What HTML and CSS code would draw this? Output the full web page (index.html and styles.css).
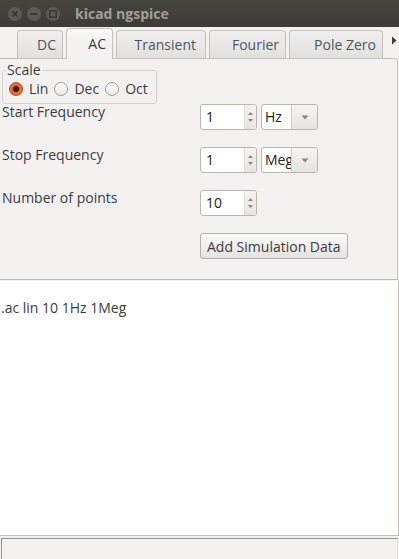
FILE: index.html
```html
<!DOCTYPE html>
<html lang="en">
<head>
    <meta charset="UTF-8">
    <title>kicad ngspice</title>
    <link rel="stylesheet" href="styles.css">
</head>
<body>
    <div class="titlebar">
        <div class="win-buttons">
            <span class="win-btn">
                <svg width="14" height="14" viewBox="0 0 14 14"><path d="M4.5 4.5 L9.5 9.5 M9.5 4.5 L4.5 9.5" stroke="#34332f" stroke-width="1.6"/></svg>
            </span>
            <span class="win-btn">
                <svg width="14" height="14" viewBox="0 0 14 14"><path d="M3.5 7 H10.5" stroke="#34332f" stroke-width="1.6"/></svg>
            </span>
            <span class="win-btn">
                <svg width="14" height="14" viewBox="0 0 14 14"><rect x="3.8" y="3.8" width="6.4" height="6.4" fill="none" stroke="#34332f" stroke-width="1.3"/></svg>
            </span>
        </div>
        <div class="title">kicad ngspice</div>
    </div>

    <div class="tabs">
        <span class="tab-scroll left"></span>
        <div class="tab tab-dc">DC</div>
        <div class="tab tab-ac active">AC</div>
        <div class="tab tab-transient">Transient</div>
        <div class="tab tab-fourier">Fourier</div>
        <div class="tab tab-pz">Pole Zero</div>
        <span class="tab-scroll right">
            <svg width="6" height="9" viewBox="0 0 6 9"><path d="M1 0.5 L5.5 4.5 L1 8.5 Z" fill="#3c3c3c"/></svg>
        </span>
    </div>

    <div class="panel">
        <fieldset class="scale">
            <legend>Scale</legend>
            <label class="radio"><span class="dot checked"></span>Lin</label>
            <label class="radio"><span class="dot"></span>Dec</label>
            <label class="radio"><span class="dot"></span>Oct</label>
        </fieldset>

        <div class="form">
            <div class="label">Start Frequency</div>
            <div class="controls">
                <div class="spin">
                    <span class="spin-value">1</span>
                    <span class="spin-btns">
                        <svg width="7" height="14" viewBox="0 0 7 14"><path d="M1 5 L3.5 2 L6 5 Z M1 9 L3.5 12 L6 9 Z" fill="#8e8b86"/></svg>
                    </span>
                </div>
                <div class="combo">
                    <span class="combo-value">Hz</span>
                    <span class="combo-arrow">
                        <svg width="8" height="5" viewBox="0 0 8 5"><path d="M0.5 0.5 H7.5 L4 4.5 Z" fill="#8a8782"/></svg>
                    </span>
                </div>
            </div>

            <div class="label">Stop Frequency</div>
            <div class="controls">
                <div class="spin">
                    <span class="spin-value">1</span>
                    <span class="spin-btns">
                        <svg width="7" height="14" viewBox="0 0 7 14"><path d="M1 5 L3.5 2 L6 5 Z M1 9 L3.5 12 L6 9 Z" fill="#8e8b86"/></svg>
                    </span>
                </div>
                <div class="combo">
                    <span class="combo-value">Meg</span>
                    <span class="combo-arrow">
                        <svg width="8" height="5" viewBox="0 0 8 5"><path d="M0.5 0.5 H7.5 L4 4.5 Z" fill="#8a8782"/></svg>
                    </span>
                </div>
            </div>

            <div class="label">Number of points</div>
            <div class="controls">
                <div class="spin">
                    <span class="spin-value">10</span>
                    <span class="spin-btns">
                        <svg width="7" height="14" viewBox="0 0 7 14"><path d="M1 5 L3.5 2 L6 5 Z M1 9 L3.5 12 L6 9 Z" fill="#8e8b86"/></svg>
                    </span>
                </div>
            </div>

            <div class="label"></div>
            <div class="controls">
                <button class="btn">Add Simulation Data</button>
            </div>
        </div>
    </div>

    <div class="output">.ac lin 10 1Hz 1Meg</div>

    <div class="statusbar"></div>
</body>
</html>
```

FILE: styles.css
```css
* {
    margin: 0;
    padding: 0;
    box-sizing: border-box;
}

body {
    width: 399px;
    height: 559px;
    overflow: hidden;
    background-color: #f2f1f0;
    font-family: 'Open Sans', 'DejaVu Sans', sans-serif;
    font-size: 14px;
    line-height: 16px;
    color: #3c3c3c;
    display: flex;
    flex-direction: column;
}

.titlebar {
    height: 27px;
    flex: none;
    background: linear-gradient(#46453f, #3c3b37);
    display: flex;
    align-items: center;
}

.win-buttons {
    display: flex;
    gap: 5px;
    padding-left: 8px;
}

.win-btn {
    width: 14px;
    height: 14px;
    border-radius: 50%;
    background-color: #5b5a55;
    display: flex;
}

.title {
    margin-left: 15px;
    font-weight: bold;
    font-size: 14px;
    color: #a29f98;
}

.tabs {
    height: 31px;
    flex: none;
    display: flex;
    align-items: flex-end;
    gap: 3px;
}

.tab-scroll.left {
    width: 14px;
}

.tab-scroll.right {
    align-self: center;
    margin-left: 5px;
    display: flex;
    margin-top: -4px;
}

.tab {
    height: 28px;
    border: 1px solid #c4c1bc;
    border-bottom: none;
    border-radius: 4px 4px 0 0;
    background: linear-gradient(#f0efed, #e2e0dd);
    color: #4a5666;
    text-align: right;
    padding: 6px 6px 0 0;
    white-space: nowrap;
}

.tab.active {
    height: 31px;
    margin-bottom: -1px;
    position: relative;
    z-index: 1;
    background: linear-gradient(#fafaf9, #f2f1f0 40%);
    color: #3c3c3c;
    padding-top: 7px;
}

.tab-dc { width: 46px; }
.tab-ac { width: 47px; }
.tab-transient { width: 90px; padding-right: 9px; }
.tab-fourier { width: 77px; }
.tab-pz { width: 94px; }

.panel {
    height: 222px;
    flex: none;
    width: 398px;
    border-top: 1px solid #c4c1bc;
    border-right: 1px solid #c4c1bc;
    border-bottom: 1px solid #bcb9b4;
    border-radius: 0 4px 0 0;
    padding: 3px 0 0 2px;
}

.scale {
    width: 155px;
    height: 42px;
    border: 1px solid #d5d2ce;
    border-radius: 3px;
    padding: 0 0 0 6px;
    display: flex;
    align-items: center;
    gap: 6px;
}

.scale legend {
    padding: 0 1px;
    margin-left: -3px;
    color: #3c3c3c;
}

.radio {
    display: flex;
    align-items: center;
    gap: 6px;
    margin-top: -4px;
}

.dot {
    width: 14px;
    height: 14px;
    border-radius: 50%;
    border: 1px solid #9d9a95;
    background: linear-gradient(#ffffff, #ecebe9);
    display: inline-block;
}

.dot.checked {
    border-color: #b34d1f;
    background: radial-gradient(circle, #3b1d0f 0, #3b1d0f 2.5px, #e4622c 3.5px, #ef7a45 100%);
}

.form {
    display: grid;
    grid-template-columns: 198px auto;
    grid-auto-rows: 26px;
    row-gap: 17px;
}

.controls {
    display: flex;
    gap: 4px;
}

.spin {
    width: 57px;
    height: 26px;
    border: 1px solid #b9b6b1;
    border-radius: 3px;
    background-color: #fff;
    display: flex;
}

.spin-value {
    flex: 1;
    padding: 4px 0 0 5px;
    color: #222;
}

.spin-btns {
    width: 12px;
    border-left: 1px solid #dedcd9;
    background: linear-gradient(#f4f3f2, #e7e5e3);
    border-radius: 0 3px 3px 0;
    display: flex;
    align-items: center;
    justify-content: center;
}

.combo {
    width: 57px;
    height: 26px;
    border: 1px solid #b9b6b1;
    border-radius: 3px;
    background-color: #fff;
    display: flex;
    overflow: hidden;
}

.combo-value {
    width: 29px;
    overflow: hidden;
    white-space: nowrap;
    padding: 4px 0 0 3px;
    color: #222;
}

.combo-arrow {
    flex: 1;
    border-left: 1px solid #d3d0cc;
    background: linear-gradient(#f5f4f3, #e6e4e1);
    display: flex;
    align-items: center;
    justify-content: center;
}

.btn {
    height: 26px;
    padding: 0 6px;
    border: 1px solid #b3b0ab;
    border-radius: 3px;
    background: linear-gradient(#fbfbfa, #e4e2df);
    font-family: 'Open Sans', 'DejaVu Sans', sans-serif;
    font-size: 14px;
    color: #3c3c3c;
}

.output {
    flex: none;
    height: 255px;
    margin-top: 1px;
    background-color: #fff;
    border-right: 1px solid #c4c1bc;
    border-bottom: 1px solid #c4c1bc;
    padding: 19px 0 0 1px;
    color: #3c3c3c;
}

.statusbar {
    flex: 1;
    margin: 2px 1px 0 1px;
    border-top: 1px solid #939190;
    border-left: 1px solid #939190;
    border-right: 1px solid #dcdad7;
}
```
